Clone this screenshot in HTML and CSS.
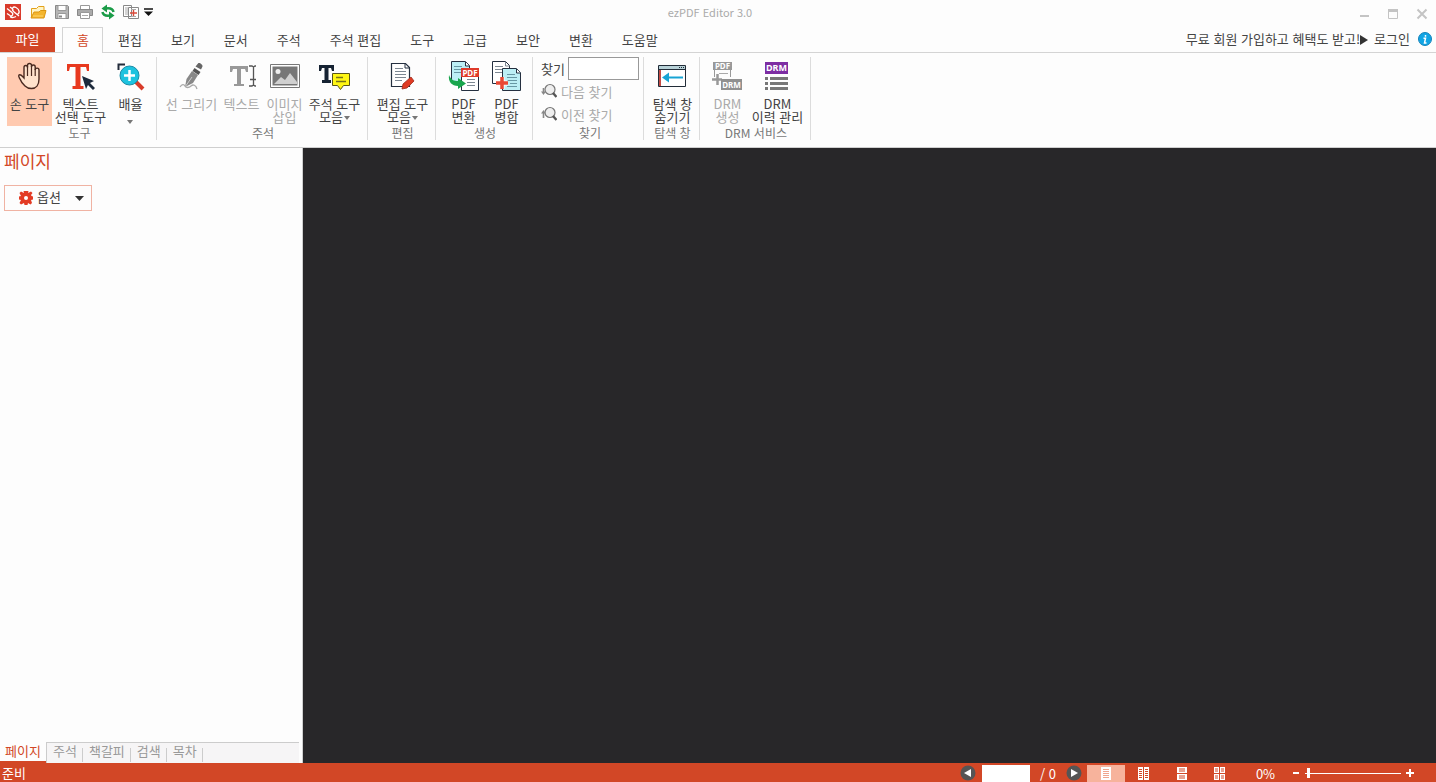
FILE: index.html
```html
<!DOCTYPE html>
<html lang="ko">
<head>
    <meta charset="UTF-8">
    <meta name="viewport" content="width=device-width, initial-scale=1.0">
    <title>ezPDF Editor 3.0</title>
    <link rel="stylesheet" href="styles.css">
</head>
<body>
    <!-- 제목 표시줄 -->
    <header class="titlebar">
        <div class="quick">
            <svg class="logo" width="16" height="16" viewBox="0 0 16 16"><rect width="16" height="16" fill="#d93a2b"/><path d="M2 4.500l5 4c2 2 0 4-2 3L2 9.500M5 3l3.500 2.500M14 12L8.500 7.500C6 5 8 2 11 3.500c4 2 4 6 1 7M5 12.500c2 2 4 1 6 0" fill="none" stroke="#fff" stroke-width="1.300"/></svg>
            <button type="button" aria-label="열기"><svg width="17" height="16" viewBox="0 0 17 16"><path d="M1.500 13V4.500h5l2-2h5.500V7" fill="#fff4c4" stroke="#e3a119"/><path d="M1 14l3-6h5l1.500-1.500H16L14 14z" fill="#f4b52d" stroke="#dc9611"/><path d="M3 12h10" stroke="#ffd66c"/></svg></button>
            <button type="button" aria-label="저장"><svg width="16" height="16" viewBox="0 0 16 16"><path d="M1.500 1.500h12l1 1v12h-13z" fill="#b5b5b5" stroke="#888"/><path d="M4 1.500h8v5H4zM4 9.500h8v5H4z" fill="#fff" stroke="#999"/><path d="M5 11.500h3v2H5z" fill="#888"/></svg></button>
            <button type="button" aria-label="인쇄"><svg width="16" height="16" viewBox="0 0 16 16"><path d="M3.500 5V1.500h9V5" fill="#fff" stroke="#999"/><path d="M.500 5.500h15v6H.500z" fill="#aaa" stroke="#888"/><path d="M3.500 8.500h9v6h-9z" fill="#fff" stroke="#999"/><path d="M5 11.500h6" stroke="#aaa"/></svg></button>
            <button type="button" aria-label="회전"><svg width="16" height="16" viewBox="0 0 16 16"><path d="M13.500 8C13 5 10 4 6 4.500M2.500 8C3 11 6 12 10 11.500" fill="none" stroke="#1b9c48" stroke-width="2.500"/><path d="M1.500 4.500L7 .500v8zM14.500 11.500L9 7.500v8z" fill="#1b9c48"/></svg></button>
            <button type="button" aria-label="병합"><svg width="16" height="16" viewBox="0 0 16 16"><path d="M.500 1.500h8v11h-8zM5.500 3.500h10v11h-10z" fill="#fff" stroke="#888"/><path d="M2 4h3M2 6h3M2 8h3M2 10h3M8 5.500h5M8 12.500h5" stroke="#aaa"/><path d="M7 9h7M10.500 6v6" stroke="#d94a3a" stroke-width="1.400"/></svg></button>
            <button type="button" class="narrow" aria-label="빠른 실행 설정"><svg width="9" height="8" viewBox="0 0 9 8"><path d="M0 1h9" stroke="#111" stroke-width="1.500"/><path d="M0 3.500h9L4.500 8z" fill="#111"/></svg></button>
        </div>
        <h1>ezPDF Editor 3.0</h1>
        <div class="window-buttons">
            <button type="button" aria-label="최소화"><svg width="12" height="12" viewBox="0 0 12 12"><path d="M2 8h9" stroke="#c4c4c4" stroke-width="2"/></svg></button>
            <button type="button" aria-label="최대화"><svg width="12" height="12" viewBox="0 0 12 12"><path d="M1.500 2.500h9v8h-9z" fill="none" stroke="#c4c4c4"/><path d="M1 2.500h10" stroke="#c4c4c4" stroke-width="3"/></svg></button>
            <button type="button" aria-label="닫기"><svg width="12" height="12" viewBox="0 0 12 12"><path d="M1.500 1.500l9 9M10.500 1.500l-9 9" stroke="#c4c4c4" stroke-width="2"/></svg></button>
        </div>
    </header>

    <!-- 메뉴 탭 -->
    <nav class="menu">
        <button type="button" class="file">파일</button>
        <button type="button" class="active">홈</button>
        <button type="button">편집</button>
        <button type="button">보기</button>
        <button type="button">문서</button>
        <button type="button">주석</button>
        <button type="button">주석 편집</button>
        <button type="button">도구</button>
        <button type="button">고급</button>
        <button type="button">보안</button>
        <button type="button">변환</button>
        <button type="button">도움말</button>
        <div class="account">
            <a href="#">무료 회원 가입하고 혜택도 받고!</a>
            <svg width="8" height="12" viewBox="0 0 8 12"><path d="M0 2l8 5-8 5z" fill="#333"/></svg>
            <a href="#" class="login">로그인</a>
            <button type="button" class="info" aria-label="정보"><svg width="14" height="14" viewBox="0 0 14 14"><circle cx="7" cy="7" r="6.500" fill="#12a5e4" stroke="#1683ba"/><path d="M7.500 3v1.800M5.500 6.300h2L6.500 11h2" fill="none" stroke="#fff" stroke-width="1.500"/></svg></button>
        </div>
    </nav>

    <!-- 리본 -->
    <section class="ribbon">
        <div class="group">
            <div class="tools">
                <button type="button" class="tool mid selected"><svg width="32" height="32" viewBox="0 0 32 32"><path d="M11 26c-2-2-4-4-5-7-1-2-2-3-1-4 2-1 3 1 5 3V7.500c0-2.700 3.500-2.700 3.500 0V5.500c0-2.700 4-2.700 4 0V7c0-2.700 3.700-2.700 3.700 0v3c0-2.500 3.800-2.500 3.800 0v9c0 6-3 9.500-7.500 9.500-3 0-5-1-6.500-2.500z" fill="#ffe2cc" stroke="#4a2a20" stroke-width="1.400"/><path d="M13.500 6v10M17.500 6v10M21.200 9v7" stroke="#4a2a20" stroke-width="1.200"/></svg><span>손 도구</span></button>
                <button type="button" class="tool wide"><svg width="32" height="32" viewBox="0 0 32 32"><path d="M2 4h22v7h-2l-1-4h-5.500v19h3v3H7.500v-3h3V7H5l-1 4H2z" fill="#e8391f"/><path d="M17 16l12 5-4 2 5 5-2 2-5-5-2 4z" fill="#1d2a3c"/></svg><span>텍스트<br>선택 도구</span></button>
                <button type="button" class="tool"><svg width="32" height="32" viewBox="0 0 32 32"><path d="M3.500 10V4.500H10" fill="none" stroke="#222b3a" stroke-width="2"/><path d="M21 22l7 7" stroke="#d93c2a" stroke-width="4"/><circle cx="14.500" cy="15.500" r="9.500" fill="#1ec3df" stroke="#198ba6"/><path d="M9 15.500h11M14.500 10v11" stroke="#fff" stroke-width="2.500"/></svg><span>배율</span><i class="arrow"></i></button>
            </div>
            <h2>도구</h2>
        </div>
        <div class="group">
            <div class="tools">
                <button type="button" class="tool wide" disabled><svg width="32" height="32" viewBox="0 0 32 32"><path d="M19.500 6.500L22 3.500c1-1.500 5 1 4.500 3L25 9.500z" fill="#666"/><path d="M18.500 8l6 4-2 3-6-4z" fill="#555"/><path d="M16 11l6 4-5 8-8 4 1.500-8z" fill="#888"/><path d="M9 27l7-10" stroke="#ccc"/><path d="M4 27c2-3 4-3 5-1s4 2 6 0 5-1 6 3" fill="none" stroke="#aaa" stroke-width="1.300"/></svg><span>선 그리기</span></button>
                <button type="button" class="tool" disabled><svg width="32" height="32" viewBox="0 0 32 32"><path d="M4 6h18v6h-2l-1-3h-4v15h3v2H8v-2h3V9H7l-1 3H4z" fill="#999"/><path d="M23 6h3l1.500 1L29 6h1M23 26h3l1.500-1 1.500 1h1M27.500 7v18M24 19.500h6" fill="none" stroke="#555" stroke-width="1.300"/></svg><span>텍스트</span></button>
                <button type="button" class="tool" disabled><svg width="32" height="32" viewBox="0 0 32 32"><path d="M1.500 4.500h29v23h-29z" fill="#fff" stroke="#777"/><path d="M3.500 6.500h25v19h-25z" fill="#777"/><path d="M5 24l7-7 4 3 5-7 7 9v2z" fill="#d0d0d0"/><circle cx="9" cy="11.500" r="2.500" fill="#eee"/></svg><span>이미지<br>삽입</span></button>
                <button type="button" class="tool wide"><svg width="32" height="32" viewBox="0 0 32 32"><path d="M0 5h15v6h-2l-1-3H9.500v12H12v3H3v-3h2.500V8H3l-1 3H0z" fill="#162333"/><path d="M13.500 13.500h17v12h-6l-3 4-3-4h-5z" fill="#fff714" stroke="#59551a"/><path d="M17 17.500h7M17 21.500h10" stroke="#77721b" stroke-width="1.300"/></svg><span>주석 도구<br>모음<i class="arrow"></i></span></button>
            </div>
            <h2>주석</h2>
        </div>
        <div class="group">
            <div class="tools">
                <button type="button" class="tool wide"><svg width="32" height="32" viewBox="0 0 32 32"><path d="M4.500 3.500h14l4 4v19h-18z" fill="#fff" stroke="#253040" stroke-width="1.200"/><path d="M18 4v4h4" fill="none" stroke="#253040"/><path d="M8 8.500h8M8 11.500h11M8 14.500h11M8 17.500h11M8 20.500h7" stroke="#7c8792"/><path d="M15 29l1-5 8-7 3 4-7 7z" fill="#df3a23" stroke="#9b2b1d" stroke-width=".800"/></svg><span>편집 도구<br>모음<i class="arrow"></i></span></button>
            </div>
            <h2>편집</h2>
        </div>
        <div class="group">
            <div class="tools">
                <button type="button" class="tool"><svg width="32" height="32" viewBox="0 0 32 32"><path d="M3.500 1.500h14l4 4v17h-18z" fill="#bceff5" stroke="#253040"/><path d="M17.500 2v4h4" fill="#fff" stroke="#253040"/><path d="M6 6.500h8M6 9.500h8M6 12.500h8" stroke="#6798a4"/><path d="M13.500 9.500h17v21h-17z" fill="#fff" stroke="#253040"/><path d="M19 19.500h8M19 22.500h8M19 25.500h8" stroke="#7c8792"/><path d="M13 8h18v9H13z" fill="#df3a2a"/><text class="badge" x="22" y="15.500" fill="#fff">PDF</text><path d="M1 15c2 5 5 6 9 6v-3l8 5.500-8 5.500v-3C4 26 0 22 1 15z" fill="#19a64d"/></svg><span>PDF<br>변환</span></button>
                <button type="button" class="tool"><svg width="32" height="32" viewBox="0 0 32 32"><path d="M1.500 1.500h13l4 4v18h-17z" fill="#fff" stroke="#253040"/><path d="M14.500 2v4h4M4 6.500h8M4 9.500h8M4 12.500h8" fill="none" stroke="#7c8792"/><path d="M11.500 8.500h14l4 4v18h-18z" fill="#bceff5" stroke="#253040"/><path d="M25.500 9v4h4" fill="#fff" stroke="#253040"/><path d="M16 14.500h8M16 17.500h10M16 20.500h10M19 23.500h7M16 26.500h10" stroke="#6798a4"/><path d="M5 23h12M11 17v12" stroke="#fff" stroke-width="5"/><path d="M5 23h12M11 17v12" stroke="#e94935" stroke-width="3.500"/></svg><span>PDF<br>병합</span></button>
            </div>
            <h2>생성</h2>
        </div>
        <div class="group find">
            <div class="find-body">
                <div class="find-row"><label for="find">찾기</label><input type="text" id="find"></div>
                <button type="button" disabled><svg width="16" height="16" viewBox="0 0 16 16"><circle cx="9" cy="6.500" r="5" fill="#eee" stroke="#777" stroke-width="1.200"/><path d="M12 10l3.500 4" stroke="#555" stroke-width="2.400"/><path d="M2.500 5v5" stroke="#888" stroke-width="1.600"/><path d="M0 8.500h5L2.500 12z" fill="#888"/></svg>다음 찾기</button>
                <button type="button" disabled><svg width="16" height="16" viewBox="0 0 16 16"><circle cx="9" cy="6.500" r="5" fill="#eee" stroke="#777" stroke-width="1.200"/><path d="M12 10l3.500 4" stroke="#555" stroke-width="2.400"/><path d="M2.500 12V6" stroke="#888" stroke-width="1.600"/><path d="M0 7.500h5L2.500 4z" fill="#888"/></svg>이전 찾기</button>
            </div>
            <h2>찾기</h2>
        </div>
        <div class="group">
            <div class="tools">
                <button type="button" class="tool mid"><svg width="32" height="32" viewBox="0 0 32 32"><path d="M2.500 5.500h27v21h-27z" fill="#fff" stroke="#222c38"/><path d="M3 6h26v3H3z" fill="#b8d2d8"/><path d="M3 9.500h26M3 5.500h26" stroke="#222c38"/><path d="M23 7.500h1M25 7.500h1M27 7.500h1" stroke="#222c38"/><path d="M3 10h2v16H3z" fill="#c54b44"/><path d="M11 17.500h16" stroke="#18a4d4" stroke-width="2"/><path d="M6 17.500l7-5v10z" fill="#18a4d4"/></svg><span>탐색 창<br>숨기기</span></button>
            </div>
            <h2>탐색 창</h2>
        </div>
        <div class="group">
            <div class="tools">
                <button type="button" class="tool" disabled><svg width="32" height="32" viewBox="0 0 32 32"><path d="M3.500 10v7M19.500 10v7" stroke="#999"/><path d="M2 2h19v8H2z" fill="#999"/><text class="badge" x="11.500" y="8.500" fill="#fff">PDF</text><path d="M8 13.500h9" stroke="#aaa"/><path d="M1 19.500h10M6.500 14v11" stroke="#999" stroke-width="2.500"/><path d="M10 19h21v11H10z" fill="#909090"/><text class="badge drm" x="20.500" y="27.500" fill="#fff">DRM</text></svg><span>DRM<br>생성</span></button>
                <button type="button" class="tool wide"><svg width="32" height="32" viewBox="0 0 32 32"><path d="M4 2h23v12H4z" fill="#7d2da3"/><text class="badge drm big" x="15.500" y="11" fill="#fff">DRM</text><path d="M4 18.500h3M9 18.500h18M4 23.500h3M9 23.500h18M4 28.500h3M9 28.500h18" stroke="#777" stroke-width="3"/></svg><span>DRM<br>이력 관리</span></button>
            </div>
            <h2>DRM 서비스</h2>
        </div>
    </section>

    <main>
        <aside>
            <h3>페이지</h3>
            <button type="button" class="option">
                <svg width="14" height="14" viewBox="0 0 14 14"><path d="M5 2l-.500-2h5L9 2l1-.500L12 .500 13.500 2 12 4l.500 1 1.500.500v3L12 9l1 3-1.500 1.500L9 12l-.500 2h-3L5 12l-3 1.500L.500 12 2 9l-2-.500v-3L2 5 .500 2 2 .500z" fill="#e33b24"/><circle cx="7" cy="7" r="2" fill="#fff"/></svg>
                <span>옵션</span>
                <svg class="caret" width="9" height="5" viewBox="0 0 9 5"><path d="M0 0h9L4.500 5z" fill="#333"/></svg>
            </button>
            <div class="panel-tabs">
                <button type="button" class="active">페이지</button>
                <div class="rest">
                    <button type="button">주석</button>
                    <button type="button">책갈피</button>
                    <button type="button">검색</button>
                    <button type="button">목차</button>
                </div>
            </div>
        </aside>
        <div class="viewer"></div>
    </main>

    <!-- 상태 표시줄 -->
    <footer>
        <span class="ready">준비</span>
        <button type="button" class="circle" aria-label="이전 페이지"><svg width="16" height="16" viewBox="0 0 16 16"><circle cx="8" cy="8" r="7.500" fill="#555"/><path d="M11 4v8L4 8z" fill="#fff"/></svg></button>
        <input type="text" class="page-no" aria-label="페이지 번호">
        <span class="total">/ 0</span>
        <button type="button" class="circle" aria-label="다음 페이지"><svg width="16" height="16" viewBox="0 0 16 16"><circle cx="8" cy="8" r="7.500" fill="#555"/><path d="M5 4v8l7-4z" fill="#fff"/></svg></button>
        <div class="views">
            <button type="button" class="active" aria-label="한 페이지"><svg width="12" height="14" viewBox="0 0 12 14"><path d="M1 1h10v13H1z" fill="#fff"/><path d="M3 3.500h6M3 5.500h6M3 7.500h6M3 9.500h6M3 11.500h6" stroke="#f0a58d"/></svg></button>
            <button type="button" aria-label="두 페이지"><svg width="12" height="14" viewBox="0 0 12 14"><path d="M0 1h5v13H0zM6 1h5v13H6z" fill="#fff"/><path d="M1 3.500h3M1 5.500h3M1 7.500h3M1 9.500h3M1 11.500h3M7 3.500h3M7 5.500h3M7 7.500h3M7 9.500h3M7 11.500h3" stroke="#d24726"/></svg></button>
            <button type="button" aria-label="연속"><svg width="12" height="14" viewBox="0 0 12 14"><path d="M1 1h10v6H1zM1 8h10v6H1z" fill="#fff"/><path d="M3 3h6M3 5h6M3 10h6M3 12h6" stroke="#d24726"/></svg></button>
            <button type="button" aria-label="두 페이지 연속"><svg width="12" height="14" viewBox="0 0 12 14"><path d="M0 1h5v6H0zM6 1h5v6H6zM0 8h5v6H0zM6 8h5v6H6z" fill="#fff"/><path d="M1 3h3M1 5h3M7 3h3M7 5h3M1 10h3M1 12h3M7 10h3M7 12h3" stroke="#d24726"/></svg></button>
        </div>
        <span class="percent">0%</span>
        <button type="button" class="zoom" aria-label="축소"><svg width="8" height="8" viewBox="0 0 8 8"><path d="M1 4h6" stroke="#fff" stroke-width="2"/></svg></button>
        <input type="range" min="0" max="100" value="2" aria-label="확대 비율">
        <button type="button" class="zoom" aria-label="확대"><svg width="8" height="8" viewBox="0 0 8 8"><path d="M0 4h8M4 0v8" stroke="#fff" stroke-width="2"/></svg></button>
    </footer>
</body>
</html>
```
FILE: styles.css
```css
* {
    box-sizing: border-box;
}

body {
    display: flex;
    flex-direction: column;
    min-height: 100vh;
    margin: 0;
    background-color: #fdfdfd;
    color: #444;
    font-family: "Noto Sans CJK KR", sans-serif;
    font-size: 13px;
    line-height: 13px;
}

button {
    padding: 0;
    border: none;
    background: none;
    color: inherit;
    font: inherit;
    white-space: nowrap;
}

svg {
    display: block;
    flex: none;
}

h1, h2, h3 {
    margin: 0;
    font-weight: normal;
}

a {
    color: inherit;
    text-decoration: none;
}

/* 제목 표시줄 */
.titlebar {
    display: grid;
    grid-template-columns: 1fr auto 1fr;
    height: 27px;
}

.titlebar h1 {
    padding-right: 16px;
    color: #aaa;
    font-size: 11px;
    line-height: 24px;
}

.quick {
    display: flex;
    align-items: center;
    height: 23px;
    padding-left: 5px;
}

.quick button {
    display: flex;
    justify-content: center;
    width: 23px;
}

.quick .logo {
    margin-right: 6px;
}

.quick .narrow {
    width: 12px;
}

.window-buttons {
    display: flex;
    justify-content: flex-end;
    align-items: center;
    gap: 17px;
    padding-right: 8px;
}

/* 메뉴 탭 */
.menu {
    display: flex;
    gap: 1px;
    height: 26px;
    border-bottom: 1px solid #d4d4d4;
}

.menu > button {
    height: 25px;
    padding: 0 14px 1px;
}

.menu .file {
    width: 55px;
    margin-right: 6px;
    padding-bottom: 2px;
    background-color: #d24726;
    color: #fff;
}

.menu > .active {
    width: 41px;
    height: 26px;
    padding-bottom: 2px;
    border: 1px solid #d4d4d4;
    border-bottom: none;
    background-color: #fdfdfd;
    color: #d24726;
}

.account {
    display: flex;
    align-items: center;
    height: 23px;
    margin-left: auto;
    padding-right: 4px;
}

.login {
    margin: 0 8px 0 6px;
}

/* 리본 */
.ribbon {
    display: flex;
    height: 95px;
    padding: 4px 0 7px;
    border-bottom: 1px solid #cfcfcf;
}

.group {
    display: flex;
    flex-direction: column;
    justify-content: space-between;
    padding: 0 4px 1px 6px;
    border-right: 1px solid #dcdcdc;
}

.group:first-child {
    padding-left: 7px;
}

.group h2 {
    color: #777;
    font-size: 12px;
    text-align: center;
}

.tools {
    display: flex;
}

.tool {
    display: flex;
    flex-direction: column;
    align-items: center;
    width: 43px;
    height: 69px;
    padding-top: 3px;
}

.tool span {
    margin-top: 5px;
}

.mid {
    width: 45px;
}

.wide {
    width: 57px;
}

.selected {
    background-color: #ffcab0;
}

.ribbon button:disabled {
    color: #aaa;
}

.arrow {
    display: inline-block;
    margin-left: 1px;
    border: 3px solid transparent;
    border-top: 4px solid #777;
    border-bottom: none;
    vertical-align: middle;
}

.tool > .arrow {
    margin-top: 10px;
    margin-right: 3px;
}

.badge {
    font-family: "Noto Sans", sans-serif;
    font-size: 8px;
    font-weight: bold;
    text-anchor: middle;
}

.big {
    font-size: 9px;
}

.find {
    padding: 0 4px 1px 8px;
}

.find-row {
    display: flex;
    align-items: center;
    gap: 3px;
}

.find-row input {
    width: 71px;
    height: 23px;
    border: 1px solid #999;
    background-color: #fff;
}

.find-body button {
    display: flex;
    align-items: center;
    gap: 4px;
    height: 23px;
    padding-bottom: 1px;
}

/* 본문 */
main {
    display: flex;
    flex: 1;
}

aside {
    display: flex;
    flex-direction: column;
    align-items: flex-start;
    width: 303px;
    border-right: 1px solid #cfcfcf;
}

aside h3 {
    padding: 3px 4px;
    color: #d24726;
    font-size: 17px;
    line-height: 20px;
}

.option {
    display: flex;
    align-items: center;
    gap: 4px;
    width: 88px;
    height: 26px;
    margin: 11px 4px;
    padding: 0 7px 0 14px;
    border: 1px solid #f0b3a3;
}

.option span {
    padding-bottom: 3px;
}

.option .caret {
    margin-left: auto;
}

.panel-tabs {
    display: flex;
    align-self: stretch;
    height: 21px;
    margin-top: auto;
    padding-right: 3px;
}

.panel-tabs .active {
    width: 46px;
    padding-bottom: 2px;
    border-bottom: 2px solid #d24726;
    color: #d24726;
}

.rest {
    display: flex;
    flex: 1;
    align-items: center;
    border: 1px solid #ccc;
    border-right: none;
    border-bottom: none;
    background-color: #f6f5f6;
    color: #999;
}

.rest button {
    padding: 0 6px 5px;
    background: linear-gradient(#ccc, #ccc) right bottom / 1px 14px no-repeat;
}

.viewer {
    flex: 1;
    background-color: #282729;
}

/* 상태 표시줄 */
footer {
    display: flex;
    align-items: center;
    height: 19px;
    padding: 1px 22px 0 0;
    background-color: #d24726;
    color: #fff;
}

.ready {
    margin-right: auto;
    padding: 0 0 2px 2px;
}

.page-no {
    width: 48px;
    height: 17px;
    margin-left: 6px;
    border: none;
    background-color: #fff;
}

.total {
    width: 36px;
    text-align: center;
}

.views {
    display: flex;
    margin-left: 5px;
}

.views button {
    display: flex;
    justify-content: center;
    align-items: center;
    width: 38px;
    height: 17px;
}

.views .active {
    background-color: #f7b39c;
}

.percent {
    width: 53px;
    text-align: center;
}

footer .zoom {
    margin-right: 5px;
}

footer .zoom:last-child {
    margin: 0 0 0 5px;
}

input[type="range"] {
    width: 96px;
    height: 12px;
    margin: 0;
    appearance: none;
    background: linear-gradient(#fff, #fff) center / 100% 1px no-repeat;
}

input[type="range"]::-webkit-slider-thumb {
    appearance: none;
    width: 3px;
    height: 10px;
    background-color: #fff;
}
```
